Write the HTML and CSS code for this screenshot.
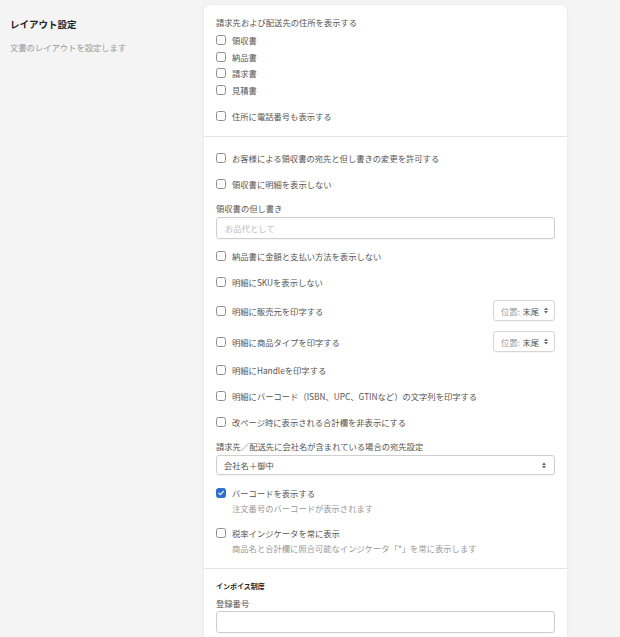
FILE: index.html
```html
<!DOCTYPE html>
<html lang="ja">
<head>
<meta charset="utf-8">
<link rel="stylesheet" href="styles.css">
</head>
<body>
<div class="page">
  <aside class="intro">
    <h2 class="intro-title">レイアウト設定</h2>
    <p class="intro-desc">文書のレイアウトを設定します</p>
  </aside>
  <main class="card">
    <section class="sec sec1">
      <div class="label first">請求先および配送先の住所を表示する</div>
      <div class="group">
        <label class="cb"><span class="box"></span><span>領収書</span></label>
        <label class="cb"><span class="box"></span><span>納品書</span></label>
        <label class="cb"><span class="box"></span><span>請求書</span></label>
        <label class="cb"><span class="box"></span><span>見積書</span></label>
      </div>
      <label class="cb phone"><span class="box"></span><span>住所に電話番号も表示する</span></label>
    </section>
    <section class="sec sec2">
      <label class="cb"><span class="box"></span><span>お客様による領収書の宛先と但し書きの変更を許可する</span></label>
      <label class="cb"><span class="box"></span><span>領収書に明細を表示しない</span></label>
      <div class="field field-input">
        <div class="label">領収書の但し書き</div>
        <div class="input"><span class="ph">お品代として</span></div>
      </div>
      <label class="cb"><span class="box"></span><span>納品書に金額と支払い方法を表示しない</span></label>
      <label class="cb"><span class="box"></span><span>明細にSKUを表示しない</span></label>
      <div class="cb-sel">
        <label class="cb"><span class="box"></span><span>明細に販売元を印字する</span></label>
        <div class="mini-sel"><span class="k">位置:</span><span class="v">末尾</span><svg class="arr" viewBox="0 0 4 7" width="4" height="7"><path d="M0 3 L2 0.5 L4 3 Z M0 4 L2 6.5 L4 4 Z" fill="#666"/></svg></div>
      </div>
      <div class="cb-sel">
        <label class="cb"><span class="box"></span><span>明細に商品タイプを印字する</span></label>
        <div class="mini-sel"><span class="k">位置:</span><span class="v">末尾</span><svg class="arr" viewBox="0 0 4 7" width="4" height="7"><path d="M0 3 L2 0.5 L4 3 Z M0 4 L2 6.5 L4 4 Z" fill="#666"/></svg></div>
      </div>
      <label class="cb"><span class="box"></span><span>明細にHandleを印字する</span></label>
      <label class="cb"><span class="box"></span><span>明細にバーコード（ISBN、UPC、GTINなど）の文字列を印字する</span></label>
      <label class="cb"><span class="box"></span><span>改ページ時に表示される合計欄を非表示にする</span></label>
      <div class="field field-select">
        <div class="label">請求先／配送先に会社名が含まれている場合の宛先設定</div>
        <div class="select"><span>会社名＋御中</span><svg class="arr" viewBox="0 0 4 7" width="4" height="7"><path d="M0 3 L2 0.5 L4 3 Z M0 4 L2 6.5 L4 4 Z" fill="#666"/></svg></div>
      </div>
      <div class="cb-help">
        <label class="cb"><span class="box checked"><svg viewBox="0 0 10 10" width="8" height="8"><path d="M2.2 5.2 L4.2 7.1 L7.9 2.9" fill="none" stroke="#fff" stroke-width="1.5" stroke-linecap="round" stroke-linejoin="round"/></svg></span><span>バーコードを表示する</span></label>
        <div class="help">注文番号のバーコードが表示されます</div>
      </div>
      <div class="cb-help">
        <label class="cb"><span class="box"></span><span>税率インジケータを常に表示</span></label>
        <div class="help">商品名と合計欄に照合可能なインジケータ「*」を常に表示します</div>
      </div>
    </section>
    <section class="sec sec3">
      <div class="sub-title">インボイス制度</div>
      <div class="field">
        <div class="label">登録番号</div>
        <div class="input"></div>
      </div>
    </section>
  </main>
</div>
</body>
</html>
```

FILE: styles.css
```css
* { box-sizing: border-box; margin: 0; padding: 0; }
html, body { height: 100%; }
body {
  background: #f4f4f4;
  font-family: "Noto Sans CJK JP", "Noto Sans", sans-serif;
  color: #555;
  font-size: 8.3px;
  overflow: hidden;
}
.page {
  display: flex;
  align-items: flex-start;
  padding-top: 5px;
}
.intro {
  width: 204px;
  padding-left: 10px;
  padding-top: 13px;
}
.intro-title {
  font-size: 9.5px;
  font-weight: 700;
  color: #222;
  line-height: 12px;
}
.intro-desc {
  margin-top: 11px;
  color: #999;
  line-height: 12px;
}
.card {
  width: 363px;
  background: #fff;
  border-radius: 6px 6px 0 0;
  box-shadow: 0 0 2px rgba(0,0,0,0.08), 0 1px 3px rgba(0,0,0,0.04);
  min-height: 700px;
}
.sec {
  padding: 0 12px;
  display: flex;
  flex-direction: column;
}
.sec1 {
  padding-top: 10px;
  padding-bottom: 12.5px;
  border-bottom: 1px solid #e4e4e4;
}
.sec2 {
  padding-top: 13px;
  padding-bottom: 13px;
  gap: 10px;
  border-bottom: 1px solid #e4e4e4;
}
.sec3 {
  padding-top: 11px;
}
.label {
  height: 14px;
  line-height: 14px;
  color: #555;
  white-space: nowrap;
}
.group {
  margin-top: 2.7px;
  display: flex;
  flex-direction: column;
}
.group .cb { height: 16.67px; }
.phone { margin-top: 9.3px; }
.cb {
  display: flex;
  align-items: center;
  height: 16px;
  gap: 6px;
  white-space: nowrap;
  color: #555;
}
.box {
  width: 10px;
  height: 10px;
  border: 1px solid #8e8e8e;
  border-radius: 2.5px;
  background: #fff;
  flex: none;
  display: flex;
  align-items: center;
  justify-content: center;
}
.box.checked {
  background: #2c6ecb;
  border-color: #2c6ecb;
}
.field {
  display: flex;
  flex-direction: column;
  gap: 2px;
}
.field-input { margin-top: -1px; margin-bottom: -1px; }
.field-select { margin-top: -1px; }
.input {
  height: 22px;
  border: 1px solid #cfcfcf;
  border-radius: 3px;
  box-shadow: 0 1px 1px rgba(0,0,0,0.04);
  display: flex;
  align-items: center;
  padding-left: 8px;
}
.ph { color: #bbb; }
.cb-sel {
  display: flex;
  justify-content: space-between;
  align-items: center;
  height: 21px;
}
.mini-sel {
  width: 62px;
  height: 21px;
  border: 1px solid #d6d6d6;
  border-radius: 3px;
  box-shadow: 0 1px 1px rgba(0,0,0,0.04);
  display: flex;
  align-items: center;
  padding-left: 7px;
  white-space: nowrap;
}
.mini-sel .k { color: #999; margin-right: 2.5px; }
.mini-sel .v { color: #555; }
.mini-sel .arr { margin-left: 5px; }
.arr { flex: none; }
.select {
  height: 20px;
  border: 1px solid #cfcfcf;
  border-radius: 3px;
  box-shadow: 0 1px 1px rgba(0,0,0,0.04);
  display: flex;
  align-items: center;
  justify-content: space-between;
  padding: 0 8px 0 7px;
  color: #555;
}
.cb-help {
  display: flex;
  flex-direction: column;
}
.help {
  padding-left: 16px;
  height: 14px;
  line-height: 14px;
  color: #999;
  white-space: nowrap;
}
.sub-title {
  font-size: 7px;
  font-weight: 700;
  color: #222;
  height: 12px;
  line-height: 12px;
}
.sec3 .field { margin-top: 4px; gap: 1px; }
```
